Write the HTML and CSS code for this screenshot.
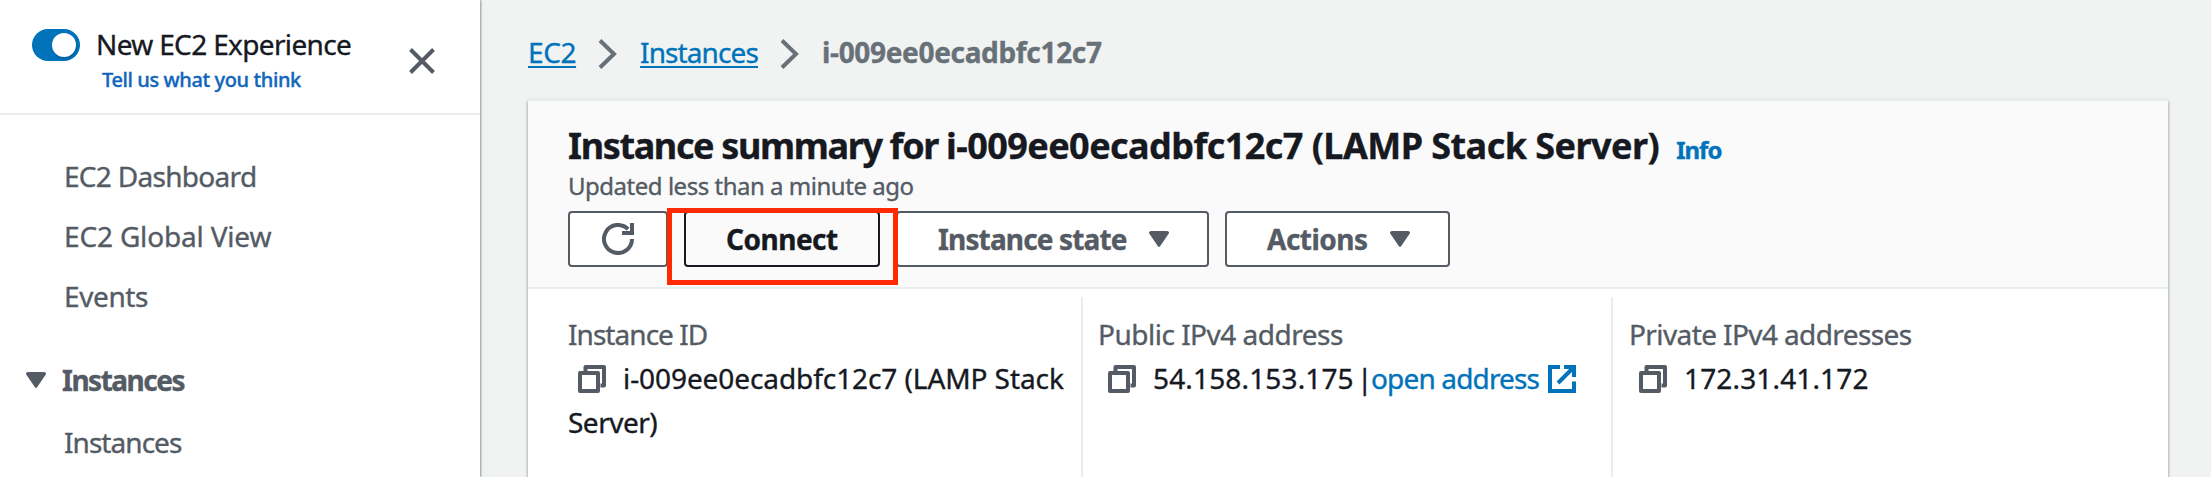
FILE: index.html
```html
<!DOCTYPE html>
<html lang="en">
<head>
<meta charset="utf-8">
<title>Instance summary | EC2</title>
<link rel="stylesheet" href="styles.css">
</head>
<body>
<svg class="defs" width="0" height="0" aria-hidden="true">
  <symbol id="copy" viewBox="0 0 28 28"><path d="M7.500 6V2H26v18.500h-3.500M2 8h18v18H2z" fill="none" stroke="currentColor" stroke-width="4" stroke-linejoin="round"/></symbol>
  <symbol id="caret" viewBox="0 0 20 16"><path d="M2 0h16q3 .4 1.600 2.800L11.300 15q-1.300 1.800-2.600 0L.4 2.800Q-1 .4 2 0z" fill="currentColor"/></symbol>
  <symbol id="chevron" viewBox="0 0 20 30"><path d="M2 1.500 16 15 2 28.500" fill="none" stroke="currentColor" stroke-width="4"/></symbol>
</svg>
<div class="app">
  <aside class="sidebar">
    <div class="sidebar-head">
      <span class="toggle"><span class="knob"></span></span>
      <div class="experience">
        <div class="experience-title"><span class="t-exp">New EC2 Experience</span></div>
        <a class="feedback">Tell us what you think</a>
      </div>
      <svg class="close" viewBox="0 0 26 26"><path d="M1.500 1.500l23 23M24.500 1.500l-23 23" stroke="currentColor" stroke-width="4"/></svg>
    </div>
    <nav class="nav">
      <a class="t-dash">EC2 Dashboard</a>
      <a class="t-global">EC2 Global View</a>
      <a class="t-events">Events</a>
      <div class="section"><svg class="caret"><use href="#caret"/></svg><span class="t-section">Instances</span></div>
      <a class="t-inst">Instances</a>
    </nav>
  </aside>
  <main class="main">
    <div class="breadcrumb">
      <a class="crumb t-ec2">EC2</a>
      <svg class="chevron"><use href="#chevron"/></svg>
      <a class="crumb t-crumb">Instances</a>
      <svg class="chevron"><use href="#chevron"/></svg>
      <span class="current">i-009ee0ecadbfc12c7</span>
    </div>
    <section class="card">
      <header class="card-head">
        <div class="title-row"><h1 class="title"><span class="title-lead">Instance summary for </span><span class="title-id">i-009ee0ecadbfc12c7 </span>(LAMP Stack Server)</h1><a class="info">Info</a></div>
        <div class="updated">Updated less than a minute ago</div>
        <div class="actions">
          <button class="btn refresh"><svg class="refresh-icon" viewBox="0 0 32 32"><path d="M30 16A14 14 0 1 1 26 6.200" fill="none" stroke="currentColor" stroke-width="4"/><path d="M20 12h12V0h-4v8h-8z" fill="currentColor"/></svg></button>
          <div class="highlighted"><button class="btn connect">Connect</button><span class="highlight"></span></div>
          <button class="btn state"><span>Instance state</span><svg class="caret"><use href="#caret"/></svg></button>
          <button class="btn menu"><span>Actions</span><svg class="caret"><use href="#caret"/></svg></button>
        </div>
      </header>
      <div class="details">
        <div class="cell">
          <div class="label t-id">Instance ID</div>
          <div class="value"><svg class="copy"><use href="#copy"/></svg><span class="t-name">i-009ee0ecadbfc12c7 (LAMP Stack</span> <span class="t-server">Server)</span></div>
        </div>
        <div class="cell">
          <div class="label t-public">Public IPv4 address</div>
          <div class="value"><svg class="copy"><use href="#copy"/></svg><span class="t-ip">54.158.153.175</span> <span class="bar">|</span><a class="open">open address</a><svg class="external" viewBox="0 0 28 28"><path d="M12 2H2v24h24v-9.500M16 2h10v10M25 3 10 18" fill="none" stroke="currentColor" stroke-width="4"/></svg></div>
        </div>
        <div class="cell">
          <div class="label t-private">Private IPv4 addresses</div>
          <div class="value"><svg class="copy"><use href="#copy"/></svg><span class="t-private-ip">172.31.41.172</span></div>
        </div>
      </div>
    </section>
  </main>
</div>
</body>
</html>
```
FILE: styles.css
```css
* { box-sizing: border-box; }
body { margin: 0; background: #f1f3f3; color: #16191f; font: 28px/44px "Noto Sans", "Open Sans", sans-serif; overflow: hidden; -webkit-text-stroke: .35px currentColor; }
.defs { position: absolute; }
svg { display: block; flex: none; }
.app { display: flex; height: 477px; }

.sidebar { width: 480px; flex: none; background: #fff; box-shadow: 1px 0 2px #8b969d; }
.sidebar-head { display: flex; height: 115px; padding: 22px 45px 0 32px; border-bottom: 2px solid #eaeded; }
.toggle { width: 48px; height: 32px; margin-top: 7px; padding: 4px; border-radius: 16px; background: #0073bb; display: flex; justify-content: flex-end; flex: none; }
.knob { width: 24px; height: 24px; border-radius: 50%; background: #fff; box-shadow: 1px 2px 2px #00477766; }
.experience { flex: 1; padding-left: 16px; white-space: nowrap; }
.experience-title { line-height: 44px; }
.t-exp { letter-spacing: -.65px; }
.feedback { display: block; margin: 0 0 0 6px; font-size: 20px; line-height: 28px; font-weight: 500; letter-spacing: -.4px; color: #1166bb; }
.close { width: 26px; height: 26px; margin-top: 26px; color: #545b64; }

.nav { display: flex; flex-direction: column; padding: 31px 0 0 64px; color: #545b64; }
.nav a { line-height: 60px; }
.section { display: flex; align-items: center; height: 60px; margin: 24px 0 2px -38px; font-weight: 700; }
.section .t-section { margin-left: 16px; }
.caret { width: 20px; height: 16px; }
.t-dash { letter-spacing: -.7px; }
.t-global { letter-spacing: -.17px; }
.t-events { letter-spacing: -.4px; }
.t-inst { letter-spacing: -.95px; }
.t-section { letter-spacing: -1.5px; }

.main { width: 1731px; padding-left: 48px; }
.breadcrumb { display: flex; align-items: center; height: 99px; line-height: 108px; padding-top: 4px; color: #687078; }
.crumb { color: #0073bb; text-decoration: underline; text-decoration-thickness: 2px; text-underline-offset: 3px; }
.t-ec2 { letter-spacing: -.4px; }
.t-crumb { letter-spacing: -.9px; }
.chevron { width: 20px; height: 30px; margin: 4px 22px 0; }
.current { font-weight: 700; letter-spacing: -.33px; }

.card { width: 1640px; height: 378px; background: #fff; border-top: 2px solid #eaeded; box-shadow: 0 2px 3px #7d898f; }
.card-head { height: 188px; padding: 21px 0 0 40px; background: #fafafa; border-bottom: 2px solid #eaeded; }
.title-row { display: flex; align-items: baseline; height: 50px; line-height: 48px; white-space: nowrap; }
.title { margin: 0; font-size: 36px; font-weight: 700; letter-spacing: -.55px; }
.title-lead { letter-spacing: -1.36px; }
.title-id { letter-spacing: -.57px; }
.info { margin-left: 17px; font-size: 24px; font-weight: 700; letter-spacing: -1px; color: #0073bb; }
.updated { height: 39px; font-size: 24px; line-height: 28px; color: #545b64; letter-spacing: -.48px; }
.actions { display: flex; gap: 16px; }
.btn { height: 56px; padding: 0 0 0 40px; display: flex; align-items: center; border: 2px solid #545b64; border-radius: 4px; background: #fff; color: #545b64; font: 700 28px/52px "Noto Sans", "Open Sans", sans-serif; white-space: nowrap; letter-spacing: -.85px; }
.refresh { width: 100px; padding: 0 0 0 32px; }
.refresh-icon { width: 32px; height: 32px; }
.highlighted { position: relative; }
.connect { width: 196px; border-color: #16191f; background: #fafafa; color: #16191f; letter-spacing: -.5px; }
.highlight { position: absolute; left: -17px; top: -3px; width: 231px; height: 77px; border: 5px solid #ff2a00; }
.state { width: 313px; }
.menu { width: 225px; letter-spacing: -.5px; }
.btn .caret { margin-left: auto; margin-right: 38px; }

.details { display: grid; grid-template-columns: 553px 530px 557px; height: 188px; padding-top: 8px; }
.cell { padding: 15px 0 0 15px; border-left: 2px solid #eaeded; white-space: nowrap; }
.cell:first-child { padding-left: 40px; border-left: 0; }
.cell:last-child { padding-left: 16px; }
.label { color: #545b64; letter-spacing: -.5px; }
.t-id { letter-spacing: -.95px; }
.t-private { letter-spacing: -.6px; }
.cell:first-child .value { width: 510px; white-space: normal; }
.copy { display: inline-block; width: 28px; height: 28px; margin: 0 17px 0 10px; vertical-align: -4px; color: #545b64; }
.t-name { letter-spacing: -.08px; }
.t-server { letter-spacing: -.5px; }
.t-ip { letter-spacing: .15px; }
.t-private-ip { letter-spacing: .15px; }
.bar { margin-left: -4px; letter-spacing: -1.5px; }
.open { color: #0073bb; letter-spacing: -.85px; }
.external { display: inline-block; width: 28px; height: 28px; margin-left: 9px; vertical-align: -4px; color: #0073bb; }
```
